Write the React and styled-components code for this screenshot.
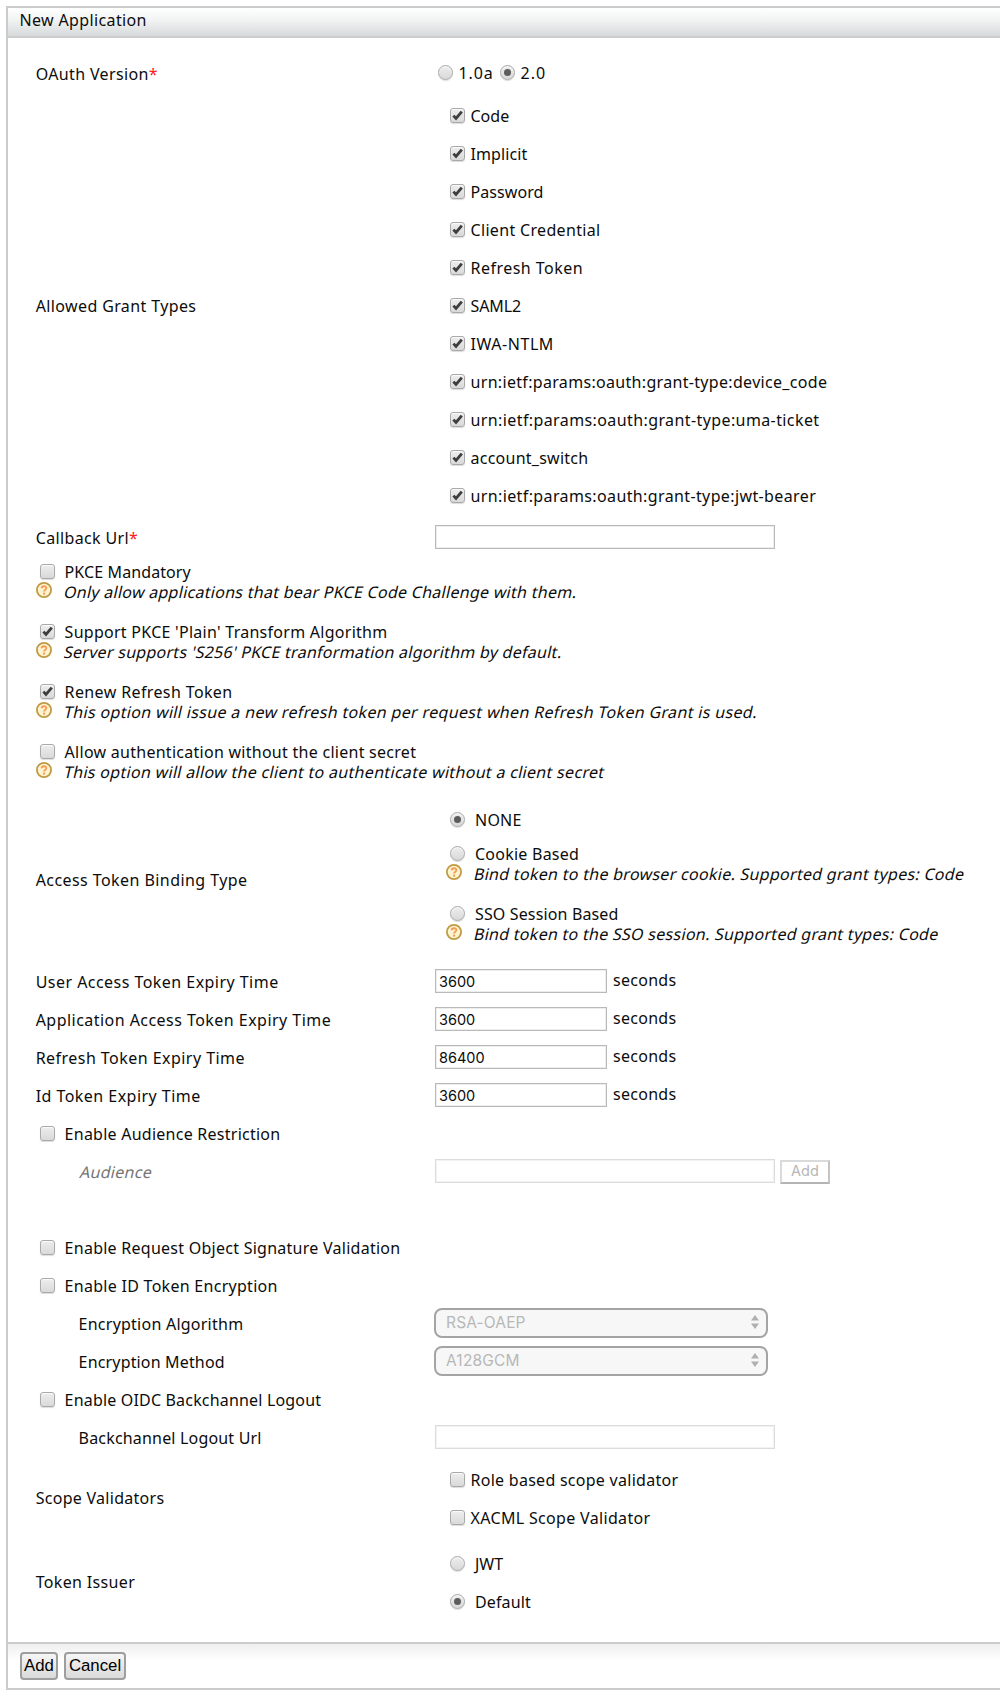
import React from "react";
import styled, { createGlobalStyle, css } from "styled-components";

const GlobalStyle = createGlobalStyle`
  * { box-sizing: border-box; }
  body {
    margin: 0;
    background: #fff;
    color: #0c0c0c;
    font-family: "Noto Sans", "Open Sans", sans-serif;
    font-size: 16px;
    line-height: 20px;
    overflow-x: hidden;
  }
`;

const Page = styled.div`
  padding: 6px 0 6px 6px;
  overflow: hidden;
`;

const Panel = styled.form`
  width: 1010px;
  border: 2px solid #ccc;
`;

const PanelHeader = styled.header`
  height: 30px;
  padding: 2px 11.5px 0;
  border-bottom: 2px solid #ccc;
  background: linear-gradient(#ffffff, #f1f3f3 45%, #d6d9da);
`;

const PanelBody = styled.div`
  height: 1604px;
  padding: 13px 0 0 27px;
`;

const PanelFooter = styled.footer`
  display: flex;
  gap: 6px;
  height: 46px;
  padding: 8px 12px;
  border-top: 2px solid #ccc;
  background: linear-gradient(#eeeeee, #ffffff 16px);
`;

const Text = styled.span`
  white-space: nowrap;
  letter-spacing: ${(p) => p.$ls ?? 0.28}px;
`;

const Required = styled.span`
  color: #ff1a1a;
  letter-spacing: 0;
`;

const Row = styled.div`
  display: grid;
  grid-template-columns: 400px 1fr;
  align-items: center;
  height: ${(p) => p.$h ?? 38}px;
  margin-top: ${(p) => p.$gap ?? 0}px;
`;

const Label = styled.div`
  padding-left: ${(p) => (p.$indent ? 43.6 : 0.7)}px;
  margin-bottom: ${(p) => p.$lift ?? 0}px;
`;

const Slanted = styled(Text)`
  display: inline-block;
  transform: skewX(-13deg);
  transform-origin: 0 80%;
  color: ${(p) => (p.$muted ? "#757575" : "inherit")};
`;

const Options = styled.div`
  padding-left: 15px;
`;

const VersionOptions = styled.div`
  display: grid;
  grid-template-columns: 62px auto;
  padding-left: 3px;
  margin-bottom: 2px;
`;

const Choice = styled.label`
  display: flex;
  align-items: center;
  gap: ${(p) => p.$gap ?? 5.5}px;
  height: ${(p) => p.$h ?? 38}px;
  padding-left: ${(p) => p.$pad ?? 0}px;
`;

const controlFace = css`
  display: block;
  flex: none;
  width: 15px;
  height: 15px;
  margin: 0 0 1px;
  border: 1px solid #a9a9a9;
  background: linear-gradient(#ededed, #d9d9d9);
  box-shadow: 0 1px 1px rgba(0, 0, 0, 0.14), inset 0 1px 1px rgba(255, 255, 255, 0.8);
`;

const CheckFace = styled.span`
  ${controlFace}
  border-radius: 3px;
`;

const CheckSvg = styled.svg`
  display: block;
`;

const RadioFace = styled.span`
  ${controlFace}
  display: grid;
  place-items: center;
  border-radius: 50%;
`;

const RadioDot = styled.span`
  width: 7px;
  height: 7px;
  border-radius: 50%;
  background: #5c5c5c;
`;

const PkceList = styled.div`
  padding-top: 1px;
`;

const Block = styled.div`
  height: 60px;
`;

const HintLine = styled.div`
  display: flex;
  gap: 10.5px;
  height: 20px;
  padding-left: ${(p) => p.$pad ?? 0}px;
`;

const HelpSvg = styled.svg`
  display: block;
  flex: none;
  width: 16px;
  height: 16px;
`;

const Group = styled.div`
  display: grid;
  grid-template-columns: 400px 1fr;
  align-items: center;
  height: ${(p) => p.$h}px;
`;

const Binding = styled.div`
  align-self: start;
  padding-top: 8px;
`;

const BindingNone = styled.div`
  padding-bottom: 14px;
`;

const Field = styled.input`
  display: block;
  width: ${(p) => p.$w}px;
  height: 24px;
  margin: 0 0 2px;
  padding: 0 3px;
  border: 1px solid #b9b9b9;
  box-shadow: inset 0 0 0 1px #ededed;
  background: #fff;
  color: #0c0c0c;
  font: 14.5px/20px Inter, sans-serif;
  &:disabled {
    border-color: #dcdcdc;
    box-shadow: inset 0 0 0 1px #f2f2f2;
  }
`;

const Inline = styled.div`
  display: flex;
  align-items: center;
  gap: ${(p) => p.$gap}px;
`;

const Unit = styled(Text)`
  margin-bottom: 4px;
`;

const SmallButton = styled.button`
  width: 50px;
  height: 24px;
  padding: 0 0 2px;
  border: 2px solid;
  border-color: #dadada #c4c4c4 #b4b4b4 #dadada;
  background: #fff;
  color: #b6b6b6;
  font: 14.5px/18px Inter, sans-serif;
`;

const SelectBox = styled.div`
  display: flex;
  align-items: center;
  justify-content: space-between;
  width: 334px;
  height: 30px;
  margin: 0 0 2px -1px;
  padding: 0 7px 0 10px;
  border: 2px solid #a4a4a4;
  border-radius: 8px;
  background: #f7f7f7;
  color: #b7b7b7;
  font: 15.5px/20px Inter, sans-serif;
`;

const Arrows = styled.svg`
  margin-bottom: 3px;
`;

const FooterButton = styled.button`
  width: ${(p) => p.$w}px;
  height: 28px;
  padding: 0;
  border: 2px solid #9e9e9e;
  border-radius: 4px;
  background: linear-gradient(#f6f6f6, #dadada);
  color: #000;
  font: 16.8px/20px "Liberation Sans", Arial, sans-serif;
  white-space: nowrap;
`;

function Check({ on }) {
  return (
    <CheckFace role="checkbox" aria-checked={!!on}>
      {on && (
        <CheckSvg width="13" height="13" viewBox="0 0 13 13">
          <path d="M2.4 6.6 L5 9.4 L10.8 2.6" fill="none" stroke="#3d3d3d" strokeWidth="2.8" />
        </CheckSvg>
      )}
    </CheckFace>
  );
}

function Radio({ on }) {
  return (
    <RadioFace role="radio" aria-checked={!!on}>
      {on && <RadioDot />}
    </RadioFace>
  );
}

function Help() {
  return (
    <HelpSvg viewBox="0 0 16 16">
      <circle cx="8" cy="8" r="7.1" fill="#fdf3cf" stroke="#c19a45" strokeWidth="1.8" />
      <path
        d="M5.7 6.3 C5.7 3.6 10.4 3.6 10.4 6.1 C10.4 7.7 8.1 7.7 8.1 9.5"
        fill="none"
        stroke="#f39a55"
        strokeWidth="1.8"
      />
      <rect x="7.1" y="10.6" width="2" height="2" fill="#f39a55" />
    </HelpSvg>
  );
}

function Hint({ pad, ls, children }) {
  return (
    <HintLine $pad={pad}>
      <Help />
      <Slanted $ls={ls}>{children}</Slanted>
    </HintLine>
  );
}

function CheckRow({ on, ls, h, children }) {
  return (
    <Choice $h={h} $gap={9.6} $pad={5}>
      <Check on={on} />
      <Text $ls={ls}>{children}</Text>
    </Choice>
  );
}

const grants = [
  ["Code", 0],
  ["Implicit", 0.1],
  ["Password", 0.07],
  ["Client Credential", 0.33],
  ["Refresh Token", 0.48],
  ["SAML2", -0.1],
  ["IWA-NTLM", 0.55],
  ["urn:ietf:params:oauth:grant-type:device_code", 0.32],
  ["urn:ietf:params:oauth:grant-type:uma-ticket", 0.4],
  ["account_switch", 0.25],
  ["urn:ietf:params:oauth:grant-type:jwt-bearer", 0.38],
];

const pkce = [
  [false, "PKCE Mandatory", 0.1, "Only allow applications that bear PKCE Code Challenge with them.", 0.28],
  [true, "Support PKCE 'Plain' Transform Algorithm", 0.27, "Server supports 'S256' PKCE tranformation algorithm by default.", 0.27],
  [true, "Renew Refresh Token", 0.38, "This option will issue a new refresh token per request when Refresh Token Grant is used.", 0.34],
  [false, "Allow authentication without the client secret", 0.27, "This option will allow the client to authenticate without a client secret", 0.31],
];

const expiry = [
  ["User Access Token Expiry Time", "3600"],
  ["Application Access Token Expiry Time", "3600"],
  ["Refresh Token Expiry Time", "86400"],
  ["Id Token Expiry Time", "3600"],
];

function DisabledSelect({ value, ls }) {
  return (
    <SelectBox>
      <Text $ls={ls}>{value}</Text>
      <Arrows width="8" height="14" viewBox="0 0 8 14">
        <path d="M0 5.6 L4 0 L8 5.6 Z M0 8.4 L4 14 L8 8.4 Z" fill="#b0b0b0" />
      </Arrows>
    </SelectBox>
  );
}

export default function App() {
  return (
    <>
      <GlobalStyle />
      <Page>
        <Panel onSubmit={(e) => e.preventDefault()}>
          <PanelHeader>
            <Text $ls={0.36}>New Application</Text>
          </PanelHeader>
          <PanelBody>
            <Row $h={46}>
              <Label>
                <Text $ls={0.36}>OAuth Version<Required>*</Required></Text>
              </Label>
              <VersionOptions>
                <Choice $h={20}>
                  <Radio />
                  <Text $ls={0.9}>1.0a</Text>
                </Choice>
                <Choice $h={20}>
                  <Radio on />
                  <Text $ls={1}>2.0</Text>
                </Choice>
              </VersionOptions>
            </Row>
            <Group $h={418}>
              <Label>
                <Text $ls={0.38}>Allowed Grant Types</Text>
              </Label>
              <Options>
                {grants.map(([name, ls]) => (
                  <Choice key={name}>
                    <Check on />
                    <Text $ls={ls}>{name}</Text>
                  </Choice>
                ))}
              </Options>
            </Group>
            <Row $h={46}>
              <Label>
                <Text $ls={0.36}>Callback Url<Required>*</Required></Text>
              </Label>
              <Field $w={340} />
            </Row>
            <PkceList>
              {pkce.map(([on, name, ls, hint, hintLs]) => (
                <Block key={name}>
                  <CheckRow on={on} ls={ls} h={20}>{name}</CheckRow>
                  <Hint pad={1} ls={hintLs}>{hint}</Hint>
                </Block>
              ))}
            </PkceList>
            <Group $h={161}>
              <Label $lift={7}>
                <Text $ls={0.43}>Access Token Binding Type</Text>
              </Label>
              <Binding>
                <BindingNone>
                  <Choice $h={20} $gap={10} $pad={15}>
                    <Radio on />
                    <Text $ls={0.23}>NONE</Text>
                  </Choice>
                </BindingNone>
                <Block>
                  <Choice $h={20} $gap={10} $pad={15}>
                    <Radio />
                    <Text $ls={0.24}>Cookie Based</Text>
                  </Choice>
                  <Hint pad={11} ls={0.29}>Bind token to the browser cookie. Supported grant types: Code</Hint>
                </Block>
                <Block>
                  <Choice $h={20} $gap={10} $pad={15}>
                    <Radio />
                    <Text $ls={0.14}>SSO Session Based</Text>
                  </Choice>
                  <Hint pad={11} ls={0.28}>Bind token to the SSO session. Supported grant types: Code</Hint>
                </Block>
              </Binding>
            </Group>
            {expiry.map(([name, value]) => (
              <Row key={name}>
                <Label>
                  <Text $ls={0.46}>{name}</Text>
                </Label>
                <Inline $gap={6}>
                  <Field $w={172} defaultValue={value} />
                  <Unit>seconds</Unit>
                </Inline>
              </Row>
            ))}
            <CheckRow ls={0.25}>Enable Audience Restriction</CheckRow>
            <Row>
              <Label $indent>
                <Slanted $muted>Audience</Slanted>
              </Label>
              <Inline $gap={5}>
                <Field $w={340} disabled />
                <SmallButton type="button" disabled>Add</SmallButton>
              </Inline>
            </Row>
            <Row />
            <CheckRow ls={0.26}>Enable Request Object Signature Validation</CheckRow>
            <CheckRow ls={0.28}>Enable ID Token Encryption</CheckRow>
            <Row>
              <Label $indent>
                <Text $ls={0.24}>Encryption Algorithm</Text>
              </Label>
              <DisabledSelect value="RSA-OAEP" ls={0.15} />
            </Row>
            <Row>
              <Label $indent>
                <Text $ls={0.16}>Encryption Method</Text>
              </Label>
              <DisabledSelect value="A128GCM" ls={0.2} />
            </Row>
            <CheckRow ls={0.18}>Enable OIDC Backchannel Logout</CheckRow>
            <Row>
              <Label $indent>
                <Text $ls={0.18}>Backchannel Logout Url</Text>
              </Label>
              <Field $w={340} disabled />
            </Row>
            <Row $h={76} $gap={4}>
              <Label $lift={2}>
                <Text>Scope Validators</Text>
              </Label>
              <Options>
                <Choice>
                  <Check />
                  <Text $ls={0.27}>Role based scope validator</Text>
                </Choice>
                <Choice>
                  <Check />
                  <Text $ls={0.33}>XACML Scope Validator</Text>
                </Choice>
              </Options>
            </Row>
            <Row $h={76} $gap={8}>
              <Label $lift={2}>
                <Text $ls={0.34}>Token Issuer</Text>
              </Label>
              <Options>
                <Choice $gap={10}>
                  <Radio />
                  <Text $ls={0}>JWT</Text>
                </Choice>
                <Choice $gap={10}>
                  <Radio on />
                  <Text $ls={0.13}>Default</Text>
                </Choice>
              </Options>
            </Row>
          </PanelBody>
          <PanelFooter>
            <FooterButton $w={38}>Add</FooterButton>
            <FooterButton $w={62} type="button">Cancel</FooterButton>
          </PanelFooter>
        </Panel>
      </Page>
    </>
  );
}
